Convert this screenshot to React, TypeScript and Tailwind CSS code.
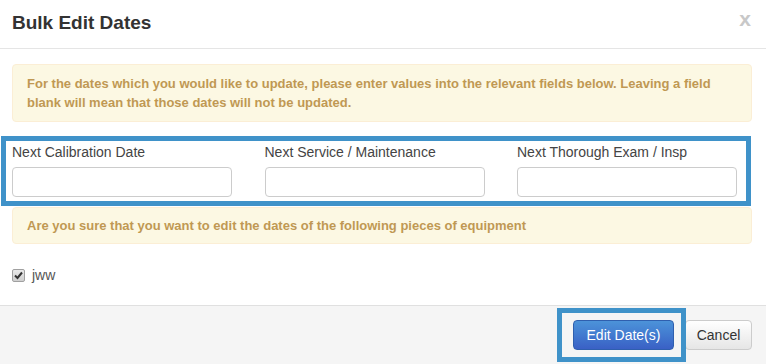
import React from "react";

export default function App() {
  const font = { fontFamily: '"Liberation Sans", Arial, sans-serif' };
  return (
    <div className="w-[766px] h-[364px] bg-white overflow-hidden text-[#333]" style={font}>
      {/* Header */}
      <div className="h-[49px] border-b border-[#e5e5e5] flex items-start justify-between pl-[12px] pr-[15px]">
        <h3 className="pt-[12px] text-[19px] leading-[22px] font-bold text-[#333]">Bulk Edit Dates</h3>
        <span className="pt-[8px] text-[21px] leading-[21px] font-bold text-[#c8c8c8]">x</span>
      </div>

      {/* Body */}
      <div className="pt-[15px] pl-[12px] pr-[14px]">
        <div className="border border-[#fbeed5] bg-[#fcf8e3] rounded-[4px] px-[14px] py-[9px] text-[13px] leading-[19px] font-bold text-[#c09853]">
          For the dates which you would like to update, please enter values into the relevant fields below. Leaving a field blank will mean that those dates will not be updated.
        </div>
      </div>

      <div className="mt-[14px] ml-[1px] w-[750px] border-[5px] border-[#3f92c9] pl-[6px] pt-[1px] pb-[4px]">
        <div className="grid grid-cols-[220px_220px_220px] gap-x-[32.5px]">
          {["Next Calibration Date", "Next Service / Maintenance", "Next Thorough Exam / Insp"].map((l) => (
            <div key={l} className="flex flex-col">
              <label className="text-[14px] leading-[20px] text-[#444] mb-[5px]">{l}</label>
              <input
                type="text"
                className="h-[30px] w-[220px] border border-[#ccc] rounded-[4px] bg-white outline-none"
              />
            </div>
          ))}
        </div>
      </div>

      <div className="mt-[1px] pl-[12px] pr-[14px]">
        <div className="border border-[#fbeed5] bg-[#fcf8e3] rounded-[4px] px-[14px] py-[8px] text-[13px] leading-[19px] font-bold text-[#c09853]">
          Are you sure that you want to edit the dates of the following pieces of equipment
        </div>
      </div>

      <div className="mt-[24px] pl-[12px] flex items-center h-[14px]">
        <span className="w-[13px] h-[13px] rounded-[2px] border border-[#a0a0a0] bg-gradient-to-b from-[#e8e8e8] to-[#cfcfcf] flex items-center justify-center">
          <svg width="9" height="9" viewBox="0 0 9 9">
            <path d="M1 4.5 L3.5 7 L8 1.5" fill="none" stroke="#333" strokeWidth="2" />
          </svg>
        </span>
        <span className="ml-[7px] text-[14px] leading-[20px] text-[#555]">jww</span>
      </div>

      {/* Footer */}
      <div className="mt-[23px] border-t border-[#e0e0e0] bg-[#f5f5f5] h-[60px] flex justify-end items-start pt-[14px] pr-[14px]">
        <div className="relative">
          <button className="h-[30px] w-[101px] rounded-[4px] border border-[#2f5fae] bg-gradient-to-b from-[#4c93d9] to-[#3a60c5] text-white text-[14px]">
            Edit Date(s)
          </button>
          <span className="absolute left-[-16px] top-[-12px] w-[129px] h-[54px] border-[5px] border-[#3f92c9] pointer-events-none" />
        </div>
        <button className="ml-[11px] h-[30px] w-[67px] rounded-[4px] border border-[#ccc] bg-gradient-to-b from-white to-[#e6e6e6] text-[#333] text-[14px]">
          Cancel
        </button>
      </div>
    </div>
  );
}
